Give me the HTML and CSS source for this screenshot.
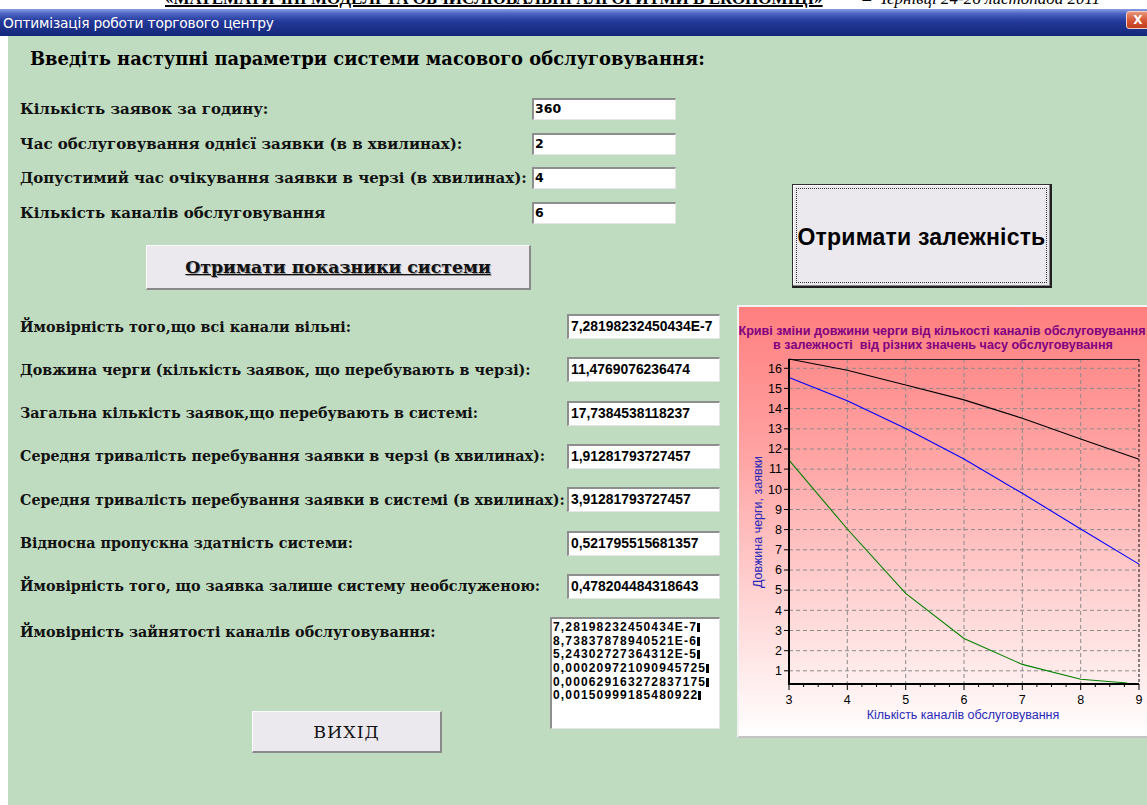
FILE: index.html
```html
<!DOCTYPE html>
<html lang="uk">
<head>
<meta charset="utf-8">
<title>Оптимізація роботи торгового центру</title>
<link rel="stylesheet" href="styles.css">
</head>
<body>
<div class="doc-head"><div class="doc-head-line"><span class="conf">«МАТЕМАТИЧНІ МОДЕЛІ ТА ОБЧИСЛЮВАЛЬНІ АЛГОРИТМИ В ЕКОНОМІЦІ»</span><span class="place">– Чернівці 24-26 листопада 2011</span></div></div>

<div class="window">
  <div class="titlebar">
    <span class="title">Оптимізація роботи торгового центру</span>
    <span class="close">X</span>
  </div>

  <div class="client">
    <div class="col-left">
      <h1 class="heading">Введіть наступні параметри системи масового обслуговування:</h1>

      <div class="params">
        <label class="lbl">Кількість заявок за годину:</label>
        <div class="edit">360</div>
        <label class="lbl">Час обслуговування однієї заявки (в в хвилинах):</label>
        <div class="edit">2</div>
        <label class="lbl">Допустимий час очікування заявки в черзі (в хвилинах):</label>
        <div class="edit">4</div>
        <label class="lbl">Кількість каналів обслуговування</label>
        <div class="edit">6</div>
      </div>

      <div class="calc-row"><button class="btn btn-calc">Отримати показники системи</button></div>

      <div class="results">
        <div class="res-row"><span class="lbl">Ймовірність того,що всі канали вільні:</span><div class="value">7,28198232450434E-7</div></div>
        <div class="res-row"><span class="lbl">Довжина черги (кількість заявок, що перебувають в черзі):</span><div class="value">11,4769076236474</div></div>
        <div class="res-row"><span class="lbl">Загальна кількість заявок,що перебувають в системі:</span><div class="value">17,7384538118237</div></div>
        <div class="res-row"><span class="lbl">Середня тривалість перебування заявки в черзі (в хвилинах):</span><div class="value">1,91281793727457</div></div>
        <div class="res-row"><span class="lbl">Середня тривалість перебування заявки в системі (в хвилинах):</span><div class="value">3,91281793727457</div></div>
        <div class="res-row"><span class="lbl">Відносна пропускна здатність системи:</span><div class="value">0,521795515681357</div></div>
        <div class="res-row"><span class="lbl">Ймовірність того, що заявка залише систему необслуженою:</span><div class="value">0,478204484318643</div></div>
        <div class="res-row res-last">
          <div class="last-cell">
            <span class="lbl">Ймовірність зайнятості каналів обслуговування:</span>
            <button class="btn btn-exit">ВИХІД</button>
          </div>
          <div class="memo">
            <div>7,28198232450434E-7<i class="cr"></i></div>
            <div>8,73837878940521E-6<i class="cr"></i></div>
            <div>5,24302727364312E-5<i class="cr"></i></div>
            <div>0,000209721090945725<i class="cr"></i></div>
            <div>0,000629163272837175<i class="cr"></i></div>
            <div>0,00150999185480922<i class="cr"></i></div>
          </div>
        </div>
      </div>
    </div>

    <div class="col-right">
      <button class="btn-dep"><span class="focus">Отримати залежність</span></button>

      <div class="chart">
        <svg width="410" height="433" viewBox="0 0 410 433">
          <text class="ch-title" x="205" y="30">Криві зміни довжини черги від кількості каналів обслуговування</text>
          <text class="ch-title" x="206" y="44">в залежності  від різних значень часу обслуговування</text>

          <!-- horizontal grid at each integer queue length -->
          <g class="grid">
            <line x1="52" x2="402" y1="63.3" y2="63.3"/>
            <line x1="52" x2="402" y1="83.4" y2="83.4"/>
            <line x1="52" x2="402" y1="103.6" y2="103.6"/>
            <line x1="52" x2="402" y1="123.8" y2="123.8"/>
            <line x1="52" x2="402" y1="144" y2="144"/>
            <line x1="52" x2="402" y1="164.1" y2="164.1"/>
            <line x1="52" x2="402" y1="184.3" y2="184.3"/>
            <line x1="52" x2="402" y1="204.5" y2="204.5"/>
            <line x1="52" x2="402" y1="224.6" y2="224.6"/>
            <line x1="52" x2="402" y1="244.8" y2="244.8"/>
            <line x1="52" x2="402" y1="265" y2="265"/>
            <line x1="52" x2="402" y1="285.2" y2="285.2"/>
            <line x1="52" x2="402" y1="305.3" y2="305.3"/>
            <line x1="52" x2="402" y1="325.5" y2="325.5"/>
            <line x1="52" x2="402" y1="345.7" y2="345.7"/>
            <line x1="52" x2="402" y1="365.8" y2="365.8"/>
            <!-- vertical grid at each channel count -->
            <line x1="110.3" x2="110.3" y1="54" y2="379"/>
            <line x1="168.7" x2="168.7" y1="54" y2="379"/>
            <line x1="227" x2="227" y1="54" y2="379"/>
            <line x1="285.3" x2="285.3" y1="54" y2="379"/>
            <line x1="343.7" x2="343.7" y1="54" y2="379"/>
          </g>
          <line class="frame-right" x1="402" x2="402" y1="54" y2="379"/>
          <line class="frame-top" x1="52" x2="402" y1="54.5" y2="54.5"/>

          <!-- curves -->
          <polyline class="s-black" points="52,54 110.3,65.3 168.7,80 227,94.9 285.3,113.3 343.7,134.1 402,154.2"/>
          <polyline class="s-blue" points="52,72.4 110.3,95.8 168.7,123.4 227,154 285.3,188.3 343.7,224 402,259.1"/>
          <polyline class="s-green" points="52,155.1 110.3,224 168.7,288.4 227,333.4 285.3,359.4 343.7,374.3 390,378"/>

          <!-- axes -->
          <line class="axis" x1="52" x2="52" y1="54" y2="380"/>
          <line class="axis" x1="51" x2="402" y1="379" y2="379"/>

          <!-- y ticks -->
          <g class="tick">
            <line x1="47" x2="52" y1="63.3" y2="63.3"/>
            <line x1="47" x2="52" y1="83.4" y2="83.4"/>
            <line x1="47" x2="52" y1="103.6" y2="103.6"/>
            <line x1="47" x2="52" y1="123.8" y2="123.8"/>
            <line x1="47" x2="52" y1="144" y2="144"/>
            <line x1="47" x2="52" y1="164.1" y2="164.1"/>
            <line x1="47" x2="52" y1="184.3" y2="184.3"/>
            <line x1="47" x2="52" y1="204.5" y2="204.5"/>
            <line x1="47" x2="52" y1="224.6" y2="224.6"/>
            <line x1="47" x2="52" y1="244.8" y2="244.8"/>
            <line x1="47" x2="52" y1="265" y2="265"/>
            <line x1="47" x2="52" y1="285.2" y2="285.2"/>
            <line x1="47" x2="52" y1="305.3" y2="305.3"/>
            <line x1="47" x2="52" y1="325.5" y2="325.5"/>
            <line x1="47" x2="52" y1="345.7" y2="345.7"/>
            <line x1="47" x2="52" y1="365.8" y2="365.8"/>
          </g>
          <!-- x ticks: major at integers, minor at quarters -->
          <g class="tick">
            <line x1="52" x2="52" y1="379" y2="385"/>
            <line x1="110.3" x2="110.3" y1="379" y2="385"/>
            <line x1="168.7" x2="168.7" y1="379" y2="385"/>
            <line x1="227" x2="227" y1="379" y2="385"/>
            <line x1="285.3" x2="285.3" y1="379" y2="385"/>
            <line x1="343.7" x2="343.7" y1="379" y2="385"/>
            <line x1="402" x2="402" y1="379" y2="385"/>
          </g>
          <path class="tick" d="M66.6 379v3M81.2 379v3M95.7 379v3M124.9 379v3M139.5 379v3M154.1 379v3M183.3 379v3M197.8 379v3M212.4 379v3M241.6 379v3M256.2 379v3M270.7 379v3M299.9 379v3M314.5 379v3M329.1 379v3M358.3 379v3M372.8 379v3M387.4 379v3"/>

          <g class="ylab">
            <text x="45" y="67.5">16</text>
            <text x="45" y="87.6">15</text>
            <text x="45" y="107.8">14</text>
            <text x="45" y="128">13</text>
            <text x="45" y="148.2">12</text>
            <text x="45" y="168.3">11</text>
            <text x="45" y="188.5">10</text>
            <text x="45" y="208.7">9</text>
            <text x="45" y="228.8">8</text>
            <text x="45" y="249">7</text>
            <text x="45" y="269.2">6</text>
            <text x="45" y="289.4">5</text>
            <text x="45" y="309.5">4</text>
            <text x="45" y="329.7">3</text>
            <text x="45" y="349.9">2</text>
            <text x="45" y="370">1</text>
          </g>
          <g class="xlab">
            <text x="52" y="399">3</text>
            <text x="110.3" y="399">4</text>
            <text x="168.7" y="399">5</text>
            <text x="227" y="399">6</text>
            <text x="285.3" y="399">7</text>
            <text x="343.7" y="399">8</text>
            <text x="402" y="399">9</text>
          </g>

          <text class="axis-title" x="226" y="414">Кількість каналів обслуговування</text>
          <text class="axis-title" transform="translate(25 217) rotate(-90)">Довжина черги, заявки</text>
        </svg>
      </div>
    </div>
  </div>
</div>
</body>
</html>
```

FILE: styles.css
```css
* {
  box-sizing: border-box;
}

html,
body {
  margin: 0;
  padding: 0;
  background: #fff;
}

body {
  width: 1147px;
  height: 805px;
  overflow: hidden;
  font-family: "DejaVu Serif", "Liberation Serif", serif;
}

/* strip of the printed page above the window */
.doc-head {
  height: 9px;
  overflow: hidden;
  white-space: nowrap;
  font-family: "Liberation Serif", serif;
  font-size: 17px;
  line-height: 20px;
}

.doc-head-line {
  margin-top: -11px;
  padding-left: 165px;
}

.doc-head .conf {
  font-weight: bold;
  text-decoration: underline;
  text-decoration-thickness: 2px;
}

.doc-head .place {
  font-style: italic;
  margin-left: 40px;
}

/* window caption */
.titlebar {
  height: 27px;
  display: flex;
  align-items: center;
  justify-content: space-between;
  padding-left: 3px;
  background: linear-gradient(to bottom, #8a9de2 0%, #4a63c2 18%, #24399a 45%, #1a2f86 75%, #13287a 100%);
}

.title {
  color: #fff;
  font-family: "DejaVu Sans", sans-serif;
  font-size: 13.8px;
  letter-spacing: -0.2px;
}

.close {
  width: 24px;
  height: 18px;
  margin-right: -3px;
  margin-top: -6px;
  border: 1px solid #f4d0c4;
  border-radius: 3px;
  background: linear-gradient(to bottom, #e8957a, #d45432 55%, #c1401f);
  color: #fff;
  font-family: "DejaVu Sans", sans-serif;
  font-size: 12px;
  font-weight: bold;
  line-height: 16px;
  text-align: center;
}

/* form client area */
.client {
  height: 769px;
  display: flex;
  background: #c0dcc0;
  border-left: 8px solid #fff;
}

.col-left {
  width: 729px;
  padding-left: 12px;
  display: flex;
  flex-direction: column;
}

.col-right {
  flex: 1;
  display: flex;
  flex-direction: column;
}

.heading {
  margin: 12px 0 0 10px;
  font-size: 17.9px;
  font-weight: bold;
  line-height: 22px;
  color: #000;
  white-space: nowrap;
}

.lbl {
  font-size: 14.3px;
  font-weight: bold;
  color: #111;
  white-space: nowrap;
}

.params {
  margin-top: 28px;
  display: grid;
  grid-template-columns: 512px 144px;
  grid-auto-rows: 22px;
  row-gap: 12.7px;
  align-items: center;
}

.params .lbl {
  font-size: 15px;
}

.edit {
  height: 22px;
  background: #fff;
  border-style: solid;
  border-width: 2px 1px 1px 2px;
  border-color: #8e8e8e #e6e6e6 #e6e6e6 #8e8e8e;
  padding-left: 1px;
  font-family: "DejaVu Sans", sans-serif;
  font-size: 12.5px;
  font-weight: bold;
  line-height: 18px;
  color: #000;
}

.btn {
  background: #ebe9ed;
  border-style: solid;
  border-width: 1px 2px 2px 1px;
  border-color: #fbfbfb #8a8a8a #8a8a8a #fbfbfb;
  color: #111;
  padding: 0;
  font-family: "DejaVu Serif", serif;
}

.calc-row {
  margin-top: 21px;
  padding-left: 126px;
}

.btn-calc {
  width: 385px;
  height: 45px;
  font-size: 17.3px;
  font-weight: bold;
  text-decoration: underline;
  text-shadow: 1px 1px 0 #9a9a9a;
}

.results {
  margin-top: 24px;
  width: 700px;
  display: flex;
  flex-direction: column;
  gap: 18.3px;
}

.res-row {
  height: 25px;
  display: flex;
  align-items: center;
  justify-content: space-between;
}

.value {
  width: 153px;
  height: 25px;
  background: #fff;
  border-style: solid;
  border-width: 2px 1px 1px 2px;
  border-color: #8e8e8e #e6e6e6 #e6e6e6 #8e8e8e;
  padding-left: 2px;
  font-family: "Liberation Sans", sans-serif;
  font-size: 13.9px;
  font-weight: bold;
  line-height: 21px;
  color: #000;
  white-space: nowrap;
  overflow: hidden;
}

.res-last {
  height: auto;
  align-items: flex-start;
}

.last-cell {
  display: flex;
  flex-direction: column;
  align-items: flex-start;
  padding-top: 7px;
}

.btn-exit {
  width: 190px;
  height: 42px;
  margin: 71px 0 0 232px;
  font-size: 17.5px;
  letter-spacing: 1px;
}

.memo {
  width: 170px;
  height: 112px;
  background: #fff;
  border-style: solid;
  border-width: 2px 1px 1px 2px;
  border-color: #8e8e8e #e6e6e6 #e6e6e6 #8e8e8e;
  padding: 2px 0 0 1px;
  font-family: "Liberation Sans", sans-serif;
  font-size: 12px;
  font-weight: bold;
  line-height: 13.6px;
  letter-spacing: 1.15px;
  color: #000;
  white-space: nowrap;
  overflow: hidden;
}

.cr {
  display: inline-block;
  width: 3px;
  height: 9px;
  margin-left: 0;
  background: #000;
  vertical-align: -1px;
}

/* big dependency button */
.btn-dep {
  width: 260px;
  height: 104px;
  margin: 148px 0 0 55px;
  padding: 3px;
  background: #ebe9ed;
  border-style: solid;
  border-width: 1px 2px 2px 1px;
  border-color: #303030 #202020 #202020 #303030;
  box-shadow: inset -1px -1px 0 #8a8a8a, inset 1px 1px 0 #fff;
  font-family: "Liberation Sans", sans-serif;
  font-size: 23px;
  font-weight: bold;
  letter-spacing: 0.2px;
  color: #000;
}

.btn-dep .focus {
  display: flex;
  width: 100%;
  height: 100%;
  align-items: center;
  justify-content: center;
  padding-top: 4px;
  border: 1px dotted #333;
}

/* chart panel */
.chart {
  margin-top: 17px;
  width: 410px;
  height: 433px;
  background: linear-gradient(to bottom, #ff7f7f 0%, #ffa4a4 35%, #ffd6d6 70%, #fff 100%);
  border-top: 2px solid #f2f2f2;
  border-left: 2px solid #f2f2f2;
  border-bottom: 2px solid #c4c4c4;
}

.chart svg {
  display: block;
  margin: -2px 0 0 -2px;
  overflow: visible;
}

.ch-title {
  font-family: "Liberation Sans", sans-serif;
  font-size: 12.6px;
  font-weight: bold;
  fill: #800080;
  text-anchor: middle;
  white-space: pre;
}

.grid line {
  stroke: #8a8a8a;
  stroke-width: 1;
  stroke-dasharray: 4 3;
}

.frame-right {
  stroke: #111;
  stroke-width: 1;
  stroke-dasharray: 3 2;
}

.frame-top {
  stroke: #222;
  stroke-width: 1;
}

.s-black,
.s-blue,
.s-green {
  fill: none;
  stroke-width: 1.1;
}

.s-black {
  stroke: #000;
}

.s-blue {
  stroke: #0000ff;
}

.s-green {
  stroke: #008000;
}

.axis {
  stroke: #000;
  stroke-width: 2;
}

.tick,
.tick line {
  stroke: #000;
  stroke-width: 1;
  fill: none;
}

.ylab text,
.xlab text {
  font-family: "Liberation Sans", sans-serif;
  font-size: 12.5px;
  fill: #000;
}

.ylab text {
  text-anchor: end;
}

.xlab text {
  text-anchor: middle;
}

.axis-title {
  font-family: "Liberation Sans", sans-serif;
  font-size: 12.5px;
  fill: #2a2ab8;
  text-anchor: middle;
}
```
